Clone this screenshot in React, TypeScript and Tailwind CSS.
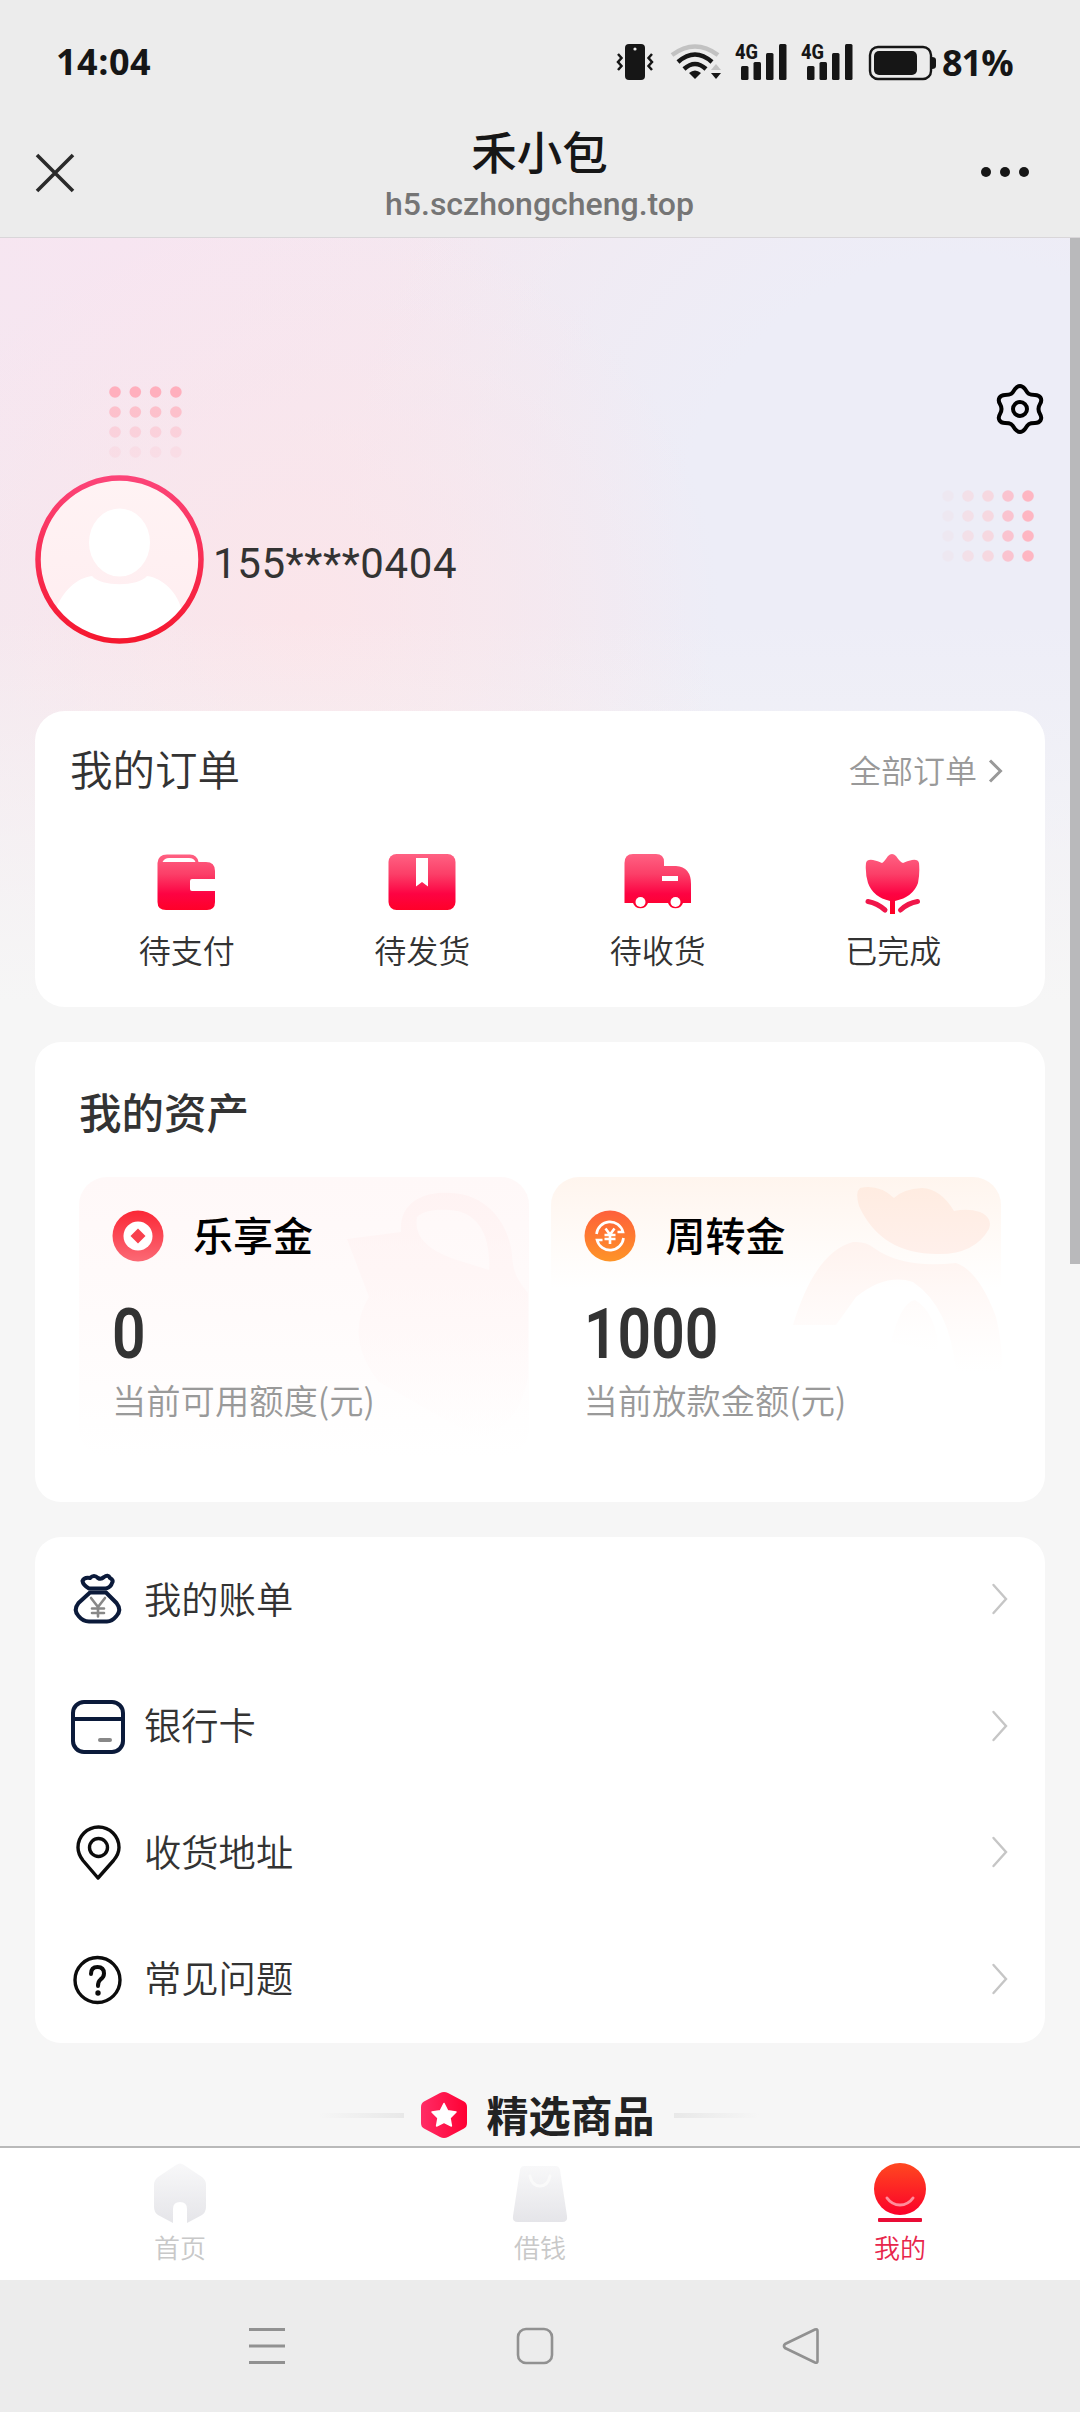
import React from 'react';

const orders = [
  { label: '待支付', icon: <WalletIcon /> },
  { label: '待发货', icon: <BoxIcon /> },
  { label: '待收货', icon: <TruckIcon /> },
  { label: '已完成', icon: <TulipIcon /> },
];

const menus = [
  { label: '我的账单', icon: <MoneyBagIcon /> },
  { label: '银行卡', icon: <CardIcon /> },
  { label: '收货地址', icon: <PinIcon /> },
  { label: '常见问题', icon: <HelpIcon /> },
];

function RedGradient({ id }: { id: string }) {
  return (
    <defs>
      <linearGradient id={id} x1="0" y1="0" x2="0" y2="60" gradientUnits="userSpaceOnUse">
        <stop offset="0" stopColor="#ff6384" />
        <stop offset="0.35" stopColor="#fb3f68" />
        <stop offset="0.68" stopColor="#fd0343" />
        <stop offset="1" stopColor="#ff0024" />
      </linearGradient>
    </defs>
  );
}

function WalletIcon() {
  return (
    <svg className="w-[70px] h-[60px]" viewBox="0 0 70 60">
      <RedGradient id="wallet" />
      <path d="M5.500 13 V10 Q6 1.500 15 1.500 H38 Q45 1.500 46.500 9 H54 Q63 9 63 18 V26 H40 Q38 26 38 28 V36 Q38 38 40 38 H63 V49 Q63 57 55 57 H14 Q5.500 57 5.500 49 Z" fill="url(#wallet)" />
      <path d="M10.500 9 Q12.500 5 17 5 H37 Q42 5 43.500 9 Z" fill="#fff" />
    </svg>
  );
}

function BoxIcon() {
  return (
    <svg className="w-[70px] h-[60px]" viewBox="0 0 70 60">
      <RedGradient id="box" />
      <rect x="1.500" y="1" width="67" height="56" rx="8" fill="url(#box)" />
      <path d="M29 5 H41 V33.500 L35 29 L29 33.500 Z" fill="#fff" />
    </svg>
  );
}

function TruckIcon() {
  return (
    <svg className="w-[70px] h-[60px]" viewBox="0 0 70 60">
      <RedGradient id="truck" />
      <path d="M1.500 10 Q1.500 1 10 1 H33 Q41 1 41 9 V13 H53 Q68 14 68 31 V50 H60 A8 8 0 0 1 45 50 H25 A8 8 0 0 1 10 50 H1.500 Z" fill="url(#truck)" />
      <rect x="39" y="23" width="16" height="5" fill="#fff" />
      <circle cx="17.500" cy="49" r="5" fill="#fff" />
      <circle cx="52.500" cy="49" r="5" fill="#fff" />
    </svg>
  );
}

function TulipIcon() {
  return (
    <svg className="w-[70px] h-[62px]" viewBox="0 0 70 62">
      <RedGradient id="tulip" />
      <path d="M8 10 Q9 6 15 7 Q20 8 24 10 Q26 9 30 3 Q34 -1 38 3 Q42 9 45 10 Q49 8 54 7 Q60 6 61 10 Q62 20 60 30 Q55 44 37 48 V61 H32 V48 Q15 44 10 30 Q7 20 8 10 Z" fill="url(#tulip)" />
      <path d="M10 48.500 Q19 50 27 57" fill="none" stroke="#f0164a" strokeWidth="5" strokeLinecap="round" />
      <path d="M59.500 48.500 Q50 50 42.500 57" fill="none" stroke="#f0164a" strokeWidth="5" strokeLinecap="round" />
    </svg>
  );
}

function MoneyBagIcon() {
  return (
    <svg className="w-[56px] h-[56px]" viewBox="0 0 56 56" fill="none" stroke="#0b1a3a" strokeWidth="4" strokeLinejoin="round" strokeLinecap="round">
      <path d="M19 16.500 Q13 13 12.500 9 Q14 5 20 6 Q24 2 28 6 Q31 8 34 5 Q38 2 40 6 Q44 8 42 11 Q41 15 36 16.500 Z" />
      <path d="M20 20.500 H36 L46.500 31 Q52 38 46.500 44 Q42 49.500 37 49.500 H19 Q13 49.500 8.500 44 Q3 38 8.500 31 Z" />
      <path d="M21 26 L28 35 L35 26 M28 35 V44.500 M22 36.500 H34 M22 41 H34" stroke="#888" strokeWidth="2.600" />
    </svg>
  );
}

function CardIcon() {
  return (
    <svg className="w-[56px] h-[56px]" viewBox="0 0 56 56" fill="none" stroke="#0b1a3a" strokeWidth="4">
      <rect x="3" y="3" width="50" height="50" rx="11" />
      <path d="M3 20 H53" />
      <path d="M30 41 H40" stroke="#888" strokeWidth="4" strokeLinecap="round" />
    </svg>
  );
}

function PinIcon() {
  return (
    <svg className="w-[56px] h-[56px]" viewBox="0 0 56 56" fill="none" stroke="#0c0c0c" strokeWidth="3.400">
      <path d="M28 53 L13 35.500 Q8 29 8 22.500 A20.500 20.500 0 0 1 49 22.500 Q49 29 43.500 35.500 Z" strokeLinejoin="round" />
      <circle cx="28.500" cy="22.500" r="9" />
    </svg>
  );
}

function HelpIcon() {
  return (
    <svg className="w-[56px] h-[56px]" viewBox="0 0 56 56" fill="none" stroke="#0c0c0c">
      <circle cx="27.500" cy="28" r="22.500" strokeWidth="3.400" />
      <path d="M21 22 Q21 15 27.500 15 Q34 15 34 21.500 Q34 25 30.500 27.500 Q28 29.500 28 34" strokeWidth="4" strokeLinecap="round" />
      <circle cx="28" cy="41" r="2.700" fill="#0c0c0c" stroke="none" />
    </svg>
  );
}

const StatusBar: React.FC = () => (
  <div className="h-[124px] shrink-0 flex items-center justify-between pl-[56px] pr-[66px] text-[#161616] font-['Open_Sans']">
    <span className="text-[36px] font-bold leading-none tracking-[0.500px]">14:04</span>
    <div className="flex items-center">
      <svg className="w-[320px] h-[48px]" viewBox="616 38 320 48" fill="#161616">
        <rect x="625" y="44" width="20" height="36" rx="4" />
        <circle cx="635" cy="49" r="1.600" fill="#ececec" />
        <path d="M618 54 L621.500 58 L618 62 L621.500 66 L618 70 M652 54 L648.500 58 L652 62 L648.500 66 L652 70" fill="none" stroke="#161616" strokeWidth="2.500" />
        <g fill="none" strokeWidth="4.500">
          <path d="M672 55 Q695 38 718 55" stroke="#c2c2c2" />
          <path d="M678 62 Q695 47 712 62" stroke="#161616" />
          <path d="M684 69 Q695 59 706 69" stroke="#161616" />
        </g>
        <path d="M689 73 Q695 68 701 73 L695 79 Z" />
        <path d="M711 70 L716 64 L721 70 Z" fill="#c2c2c2" />
        <path d="M711 73 H721 L716 79 Z" />
        {[735, 801].map((x) => (
          <g key={x}>
            <text x={x} y="59" fontSize="21" fontWeight="800" textLength="23" lengthAdjust="spacingAndGlyphs" fontFamily="Roboto">4G</text>
            <rect x={x + 6} y="66" width="7.500" height="14" rx="1.500" />
            <rect x={x + 18.500} y="62" width="7.500" height="18" rx="1.500" />
            <rect x={x + 31} y="53" width="7.500" height="27" rx="1.500" />
            <rect x={x + 44} y="44" width="7.500" height="36" rx="1.500" />
          </g>
        ))}
        <rect x="870" y="47" width="61" height="32" rx="8" fill="none" stroke="#161616" strokeWidth="2.400" />
        <rect x="874" y="51" width="43" height="24" rx="5" />
        <path d="M932 57 Q936 57 936 60 V66 Q936 69 932 69 Z" />
      </svg>
      <span className="ml-[6px] w-[72px] pt-[2px] text-[36px] font-bold leading-none tracking-[-1px]">81%</span>
    </div>
  </div>
);

const TitleBar: React.FC = () => (
  <div className="h-[114px] shrink-0 flex items-start justify-between pl-[34px] pr-[51px] border-b border-[#d9d6d9]">
    <svg className="mt-[28px] w-[42px] h-[42px]" viewBox="0 0 42 42" stroke="#2a2a2a" strokeWidth="3.600">
      <path d="M3 3 L39 39 M39 3 L3 39" />
    </svg>
    <div className="pl-[22px] flex flex-col items-center">
      <h1 className="-mt-[2px] text-[45.500px] leading-[56px] font-medium text-[#161616]">禾小包</h1>
      <p className="mt-[6px] text-[32px] leading-[40px] text-[#757575] font-medium font-[Roboto]">h5.sczhongcheng.top</p>
    </div>
    <div className="mt-[43px] flex gap-[9px]">
      <i className="size-[10px] rounded-full bg-[#161616]" />
      <i className="size-[10px] rounded-full bg-[#161616]" />
      <i className="size-[10px] rounded-full bg-[#161616]" />
    </div>
  </div>
);

const Profile: React.FC = () => (
  <section className="relative h-[473px] shrink-0">
    <svg className="absolute left-[105px] top-[144px] w-[90px] h-[80px]" viewBox="0 0 90 80">
      {[0.95, 0.65, 0.36, 0.14].map((o, r) =>
        [0, 1, 2, 3].map((c) => (
          <circle key={`${r}${c}`} cx={10 + c * 20.300} cy={10 + r * 20} r="5.800" fill="#ffacb9" opacity={o} />
        ))
      )}
    </svg>
    <svg className="absolute left-[938px] top-[248px] w-[100px] h-[80px]" viewBox="0 0 100 80">
      {[0.1, 0.32, 0.5, 0.72, 0.95].map((o, c) =>
        [0, 1, 2, 3].map((r) => (
          <circle key={`${r}${c}`} cx={10 + c * 20} cy={10 + r * 20} r="5.800" fill={c < 3 ? '#ffc3c9' : '#ffb3bf'} opacity={o} />
        ))
      )}
    </svg>
    <svg className="absolute left-[994px] top-[144px] w-[52px] h-[54px]" viewBox="-26 -27 52 54" fill="none" stroke="#000" strokeWidth="4">
      <path
        d="M-5 -20 Q0 -26 5 -20 C8 -15 9 -14 15 -14 C20 -14 23 -10 20 -5 Q17 0 20 5 C23 10 20 14 15 14 C9 14 8 15 5 20 Q0 26 -5 20 C-8 15 -9 14 -15 14 C-20 14 -23 10 -20 5 Q-17 0 -20 -5 C-23 -10 -20 -14 -15 -14 C-9 -14 -8 -15 -5 -20 Z"
        strokeLinejoin="round"
      />
      <circle r="7" />
    </svg>
    <div className="flex items-center pt-[237px] pl-[35px]">
      <svg className="w-[169px] h-[169px]" viewBox="0 0 169 169">
        <defs>
          <linearGradient id="ring" x1="0" y1="0" x2="0" y2="1">
            <stop offset="0" stopColor="#fc4478" />
            <stop offset="1" stopColor="#f5182f" />
          </linearGradient>
          <linearGradient id="face" x1="0" y1="0" x2="0" y2="1">
            <stop offset="0" stopColor="#fff3f4" />
            <stop offset="1" stopColor="#ffedf0" />
          </linearGradient>
          <clipPath id="inner"><circle cx="84.500" cy="84.500" r="79.500" /></clipPath>
        </defs>
        <circle cx="84.500" cy="84.500" r="82" fill="url(#face)" />
        <g clipPath="url(#inner)" fill="#fff">
          <path d="M57 101 C66 112 103 112 112 101 C128 103 143 118 147 136 L130 169 H40 L20 136 C28 115 42 103 57 101 Z" />
          <ellipse cx="84.500" cy="67.500" rx="30.500" ry="34" />
        </g>
        <circle cx="84.500" cy="84.500" r="81.500" fill="none" stroke="url(#ring)" strokeWidth="5.500" />
      </svg>
      <span className="ml-[9px] mt-[8px] text-[42px] leading-[50px] tracking-[0.600px] text-[#333] font-[Roboto]">155****0404</span>
    </div>
  </section>
);

const Orders: React.FC = () => (
  <section className="mx-[35px] w-[1010px] h-[296px] shrink-0 rounded-[30px] bg-white">
    <div className="flex items-center justify-between h-[114px] pl-[35px] pr-[41px]">
      <h2 className="text-[42.500px] leading-[60px] text-[#333] font-[350]">我的订单</h2>
      <a className="flex items-center text-[32px] leading-[46px] text-[#999] pt-[2px] font-[350]">
        全部订单
        <svg className="ml-[9px] mt-[4px] w-[18px] h-[26px]" viewBox="0 0 18 26" fill="none" stroke="#999" strokeWidth="3">
          <path d="M4 2.500 L14.500 13 L4 23.500" />
        </svg>
      </a>
    </div>
    <div className="grid grid-cols-4 px-[34px] pt-[28px]">
      {orders.map((o) => (
        <div key={o.label} className="flex flex-col items-center">
          <div className="h-[73px]">{o.icon}</div>
          <span className="text-[32px] leading-[46px] text-[#333] font-[350]">{o.label}</span>
        </div>
      ))}
    </div>
  </section>
);

const Assets: React.FC = () => (
  <section className="mx-[35px] mt-[35px] w-[1010px] h-[460px] shrink-0 rounded-[26px] bg-white px-[44px] pt-[39px]">
    <h2 className="text-[42.500px] leading-[60px] font-medium text-[#333]">我的资产</h2>
    <div className="mt-[36px] flex gap-[22px]">
      <div className="relative w-[450px] h-[280px] rounded-[28px] bg-gradient-to-b from-[#fff8f8] via-[#fffbfb] to-white pl-[33px] pt-[29px]">
        <svg className="absolute left-0 top-0 w-[450px] h-[280px]" viewBox="0 0 450 280">
          <defs>
            <linearGradient id="lock" x1="0" y1="0" x2="0" y2="1">
              <stop offset="0" stopColor="#fff0f0" />
              <stop offset="0.5" stopColor="#fff4f4" stopOpacity="0.700" />
              <stop offset="1" stopColor="#fff6f6" stopOpacity="0" />
            </linearGradient>
          </defs>
          <path d="M322 55 C320 25 345 14 372 16 C410 18 430 48 433 78 C434 98 441 106 449 116 V200 Q440 250 400 262 L300 205 Q265 160 290 120 L268 62 Z M338 40 C335 58 346 72 375 82 L410 93 C412 60 400 34 370 33 C355 32 344 34 338 40 Z" fill="url(#lock)" fillRule="evenodd" opacity="0.650" />
        </svg>
        <div className="relative flex items-center h-[60px]">
          <svg className="w-[52px] h-[52px]" viewBox="0 0 52 52">
            <defs>
              <linearGradient id="coin" x1="0" y1="0" x2="0" y2="1">
                <stop offset="0" stopColor="#fb2836" />
                <stop offset="1" stopColor="#fb6975" />
              </linearGradient>
            </defs>
            <circle cx="26" cy="26" r="25.500" fill="url(#coin)" />
            <circle cx="26" cy="26" r="14.500" fill="#fff" />
            <path d="M26 18.500 L33.500 26 L26 33.500 L18.500 26 Z" fill="#f8404d" />
          </svg>
          <span className="ml-[29px] -mt-[4px] text-[40px] leading-[60px] font-medium text-black">乐享金</span>
        </div>
        <div className="relative mt-[31px] h-[74px]">
          <span className="inline-block origin-left scale-x-[0.84] text-[70px] leading-[74px] font-semibold text-[#333] font-[Roboto]">0</span>
        </div>
        <p className="relative mt-[3px] text-[34.300px] leading-[50px] text-[#999] font-[350]">当前可用额度(元)</p>
      </div>
      <div className="relative w-[451px] h-[280px] rounded-[28px] bg-gradient-to-b from-[#fff5ee] via-white via-40% to-white pl-[33px] pt-[29px]">
        <svg className="absolute left-0 top-0 w-[451px] h-[280px]" viewBox="0 0 451 280">
          <defs>
            <linearGradient id="ingot" x1="0" y1="0" x2="0" y2="1">
              <stop offset="0" stopColor="#ffece1" />
              <stop offset="1" stopColor="#fff0eb" />
            </linearGradient>
            <linearGradient id="bag" x1="0" y1="0" x2="0" y2="1">
              <stop offset="0" stopColor="#fff3ef" />
              <stop offset="1" stopColor="#fff6f4" stopOpacity="0" />
            </linearGradient>
          </defs>
          <path d="M309 11 Q328 7 343 21 Q352 12 371 11 Q390 12 403 34 Q417 31 429 35 Q442 41 438 52 Q423 78 386 77 Q330 77 308 29 Q304 15 309 11 Z" fill="url(#ingot)" />
          <path d="M302 65 Q315 64 323 71 Q352 92 405 86 Q428 94 445 140 Q452 170 451 195 H405 Q399 130 362 105 Q335 96 305 120 L285 148 H242 Q264 75 302 65 Z" fill="url(#bag)" />
          <path d="M340 165 Q350 125 364 123 Q385 135 388 175 Z" fill="url(#bag)" opacity="0.300" />
        </svg>
        <div className="relative flex items-center h-[60px]">
          <svg className="w-[52px] h-[52px]" viewBox="0 0 52 52">
            <defs>
              <linearGradient id="turn" x1="0" y1="0" x2="0" y2="1">
                <stop offset="0" stopColor="#fe603b" />
                <stop offset="1" stopColor="#fe9427" />
              </linearGradient>
            </defs>
            <circle cx="26" cy="26" r="25.500" fill="url(#turn)" />
            <g fill="none" stroke="#fff" strokeWidth="2.600">
              <path d="M12.500 24 A13.500 13.500 0 0 1 39 22 L33.500 22" />
              <path d="M39.500 28 A13.500 13.500 0 0 1 13 30 L18.500 30" />
              <path d="M21.500 18.500 L26 24.500 L30.500 18.500 M26 24.500 V34 M20.500 25 H31.500 M20.500 29 H31.500" />
            </g>
          </svg>
          <span className="ml-[30px] -mt-[4px] text-[40px] leading-[60px] font-medium text-black">周转金</span>
        </div>
        <div className="relative mt-[31px] h-[74px]">
          <span className="inline-block origin-left scale-x-[0.84] text-[70px] leading-[74px] font-semibold text-[#333] font-[Roboto]">1000</span>
        </div>
        <p className="relative mt-[3px] text-[34.300px] leading-[50px] text-[#999] font-[350]">当前放款金额(元)</p>
      </div>
    </div>
  </section>
);

const Menu: React.FC = () => (
  <section className="mx-[35px] mt-[35px] w-[1010px] h-[506px] shrink-0 rounded-[26px] bg-white pl-[35px] pr-[35px]">
    {menus.map((m) => (
      <div key={m.label} className="flex items-center h-[126.500px]">
        {m.icon}
        <span className="ml-[18px] -mt-[5px] flex-1 text-[37.300px] leading-[54px] text-[#333] font-[350]">{m.label}</span>
        <svg className="-mt-[2px] w-[22px] h-[34px]" viewBox="0 0 22 34" fill="none" stroke="#c6c6c6" strokeWidth="2.400" strokeLinecap="round">
          <path d="M5.500 3 L18 17 L5.500 31" />
        </svg>
      </div>
    ))}
  </section>
);

const Featured: React.FC = () => (
  <div className="mt-[37px] -ml-[2px] flex items-center justify-center h-[70px] shrink-0">
    <i className="w-[85px] h-[5px] bg-gradient-to-r from-transparent to-[#e8e8e8]" />
    <svg className="ml-[17px] w-[46px] h-[48px]" viewBox="0 0 46 48">
      <defs>
        <linearGradient id="hex" x1="0" y1="0" x2="1" y2="0">
          <stop offset="0" stopColor="#ff2c66" />
          <stop offset="1" stopColor="#ff0033" />
        </linearGradient>
      </defs>
      <path d="M19 2 Q23 0 27 2 L43 10.500 Q46 12 46 16 V32 Q46 36 43 37.500 L27 46 Q23 48 19 46 L3 37.500 Q0 36 0 32 V16 Q0 12 3 10.500 Z" fill="url(#hex)" />
      <path d="M23 12.500 L26.700 19.800 L35 21 L29 27 L30.400 35 L23 31.300 L15.600 35 L17 27 L11 21 L19.300 19.800 Z" fill="#fff" stroke="#fff" strokeWidth="1.500" strokeLinejoin="round" />
    </svg>
    <h2 className="mx-[19px] -mt-[3px] text-[42px] leading-[60px] font-bold text-[#222]">精选商品</h2>
    <i className="w-[85px] h-[5px] bg-gradient-to-l from-transparent to-[#e8e8e8]" />
  </div>
);

const TabBar: React.FC = () => (
  <nav className="grid grid-cols-3 h-[134px] shrink-0 border-t-2 border-[#b9b9b9] bg-white text-[26px] leading-[38px] text-[#c8c8c8] font-[350]">
    <div className="flex flex-col items-center pt-[13px]">
      <svg className="w-[60px] h-[64px]" viewBox="0 0 60 64">
        <defs>
          <linearGradient id="tab" x1="0" y1="0" x2="0" y2="1">
            <stop offset="0" stopColor="#f8f8f9" />
            <stop offset="1" stopColor="#e5e5e9" />
          </linearGradient>
        </defs>
        <path d="M26 4 Q30 1 34 4 L52 16 Q56 19 56 24 V46 Q56 51 52 54 L37 62 V48 Q37 41 30 41 Q23 41 23 48 V62 L8 54 Q4 51 4 46 V24 Q4 19 8 16 Z" fill="url(#tab)" />
      </svg>
      <span className="mt-[3px]">首页</span>
    </div>
    <div className="flex flex-col items-center pt-[13px]">
      <svg className="w-[60px] h-[64px]" viewBox="0 0 60 64">
        <path d="M14 5 H46 Q49 5 50 9 L57 55 Q58 61 52 61 H8 Q2 61 3 55 L10 9 Q11 5 14 5 Z" fill="url(#tab)" />
        <path d="M20 15 Q22 25 30 25 Q38 25 40 15" fill="none" stroke="#fafafa" strokeWidth="3" strokeLinecap="round" />
      </svg>
      <span className="mt-[3px]">借钱</span>
    </div>
    <div className="flex flex-col items-center pt-[13px] text-[#e8264c]">
      <svg className="w-[60px] h-[64px]" viewBox="0 0 60 64">
        <defs>
          <linearGradient id="mine" x1="0" y1="0" x2="0" y2="1">
            <stop offset="0" stopColor="#ff4820" />
            <stop offset="1" stopColor="#fb0029" />
          </linearGradient>
        </defs>
        <circle cx="30" cy="28" r="26" fill="url(#mine)" />
        <path d="M17 37 Q22 44 30 44 Q38 44 43 37" fill="none" stroke="#ff8d9b" strokeWidth="3" strokeLinecap="round" />
        <rect x="8" y="57" width="44" height="4" rx="1" fill="#e90c35" />
      </svg>
      <span className="mt-[3px]">我的</span>
    </div>
  </nav>
);

const SystemNav: React.FC = () => (
  <div className="flex items-center h-[132px] shrink-0 pl-[247px] bg-[#ececec]">
    <svg className="w-[40px] h-[40px]" viewBox="0 0 40 40" stroke="#919191" strokeWidth="3">
      <path d="M2 3.500 H38 M2 20 H38 M2 36.500 H38" />
    </svg>
    <svg className="ml-[228px] w-[40px] h-[40px]" viewBox="0 0 40 40" fill="none" stroke="#919191" strokeWidth="2.600">
      <rect x="3" y="3" width="34" height="34" rx="8" />
    </svg>
    <svg className="ml-[226px] w-[40px] h-[40px]" viewBox="0 0 40 40" fill="none" stroke="#919191" strokeWidth="2.600">
      <path d="M34 3.500 Q36.500 2.500 36.500 5 V35 Q36.500 37.500 34 36.500 L4 22 Q2 20 4 18 Z" strokeLinejoin="round" />
    </svg>
  </div>
);

const App: React.FC = () => {
  return (
    <div className="w-[1080px] h-[2412px] flex flex-col overflow-hidden bg-[#ececec] font-['Noto_Sans_CJK_SC',sans-serif]">
      <StatusBar />
      <TitleBar />
      <main className="relative h-[1908px] shrink-0 overflow-hidden flex flex-col bg-[#f6f6f6]">
        {/* Soft hero background */}
        <div className="absolute inset-x-0 top-0 h-[763px] bg-[#f3e9f0] bg-[radial-gradient(circle_at_300px_380px,#fbe5ea_0px,rgba(251,229,234,0)_420px),radial-gradient(circle_at_960px_300px,#ededf7_280px,rgba(237,237,247,0)_620px),radial-gradient(circle_at_120px_0px,#f7e5f1_0px,rgba(247,229,241,0)_500px)]"></div>
        <div className="absolute inset-x-0 top-[380px] h-[383px] bg-gradient-to-b from-[#f6f6f600] to-[#f6f6f6]"></div>
        <div className="relative flex flex-col">
          <Profile />
          <Orders />
          <Assets />
          <Menu />
          <Featured />
        </div>
        {/* Scrollbar thumb */}
        <div className="absolute right-0 top-0 w-[10px] h-[1026px] bg-[#b9b9bb]"></div>
      </main>
      <TabBar />
      <SystemNav />
    </div>
  );
};

export default App;
